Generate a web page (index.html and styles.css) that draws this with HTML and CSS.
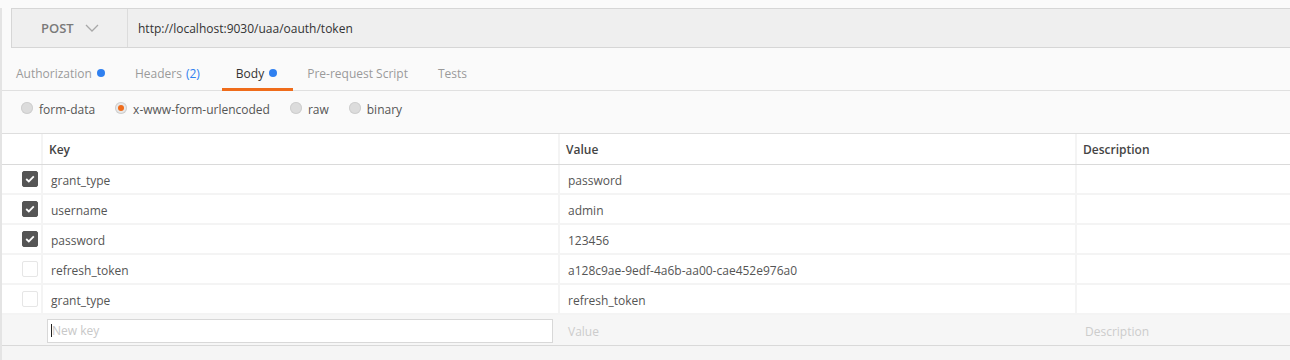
FILE: index.html
```html
<!DOCTYPE html>
<html lang="en">
<head>
  <meta charset="UTF-8" />
  <title>POST token</title>
  <link rel="stylesheet" href="styles.css">
</head>
<body>
  <div class="builder">
    <!-- request line -->
    <div class="url-bar">
      <div class="method">
        <span>POST</span>
        <svg class="chevron" width="14" height="8" viewBox="0 0 14 8"><path d="M1 1 L7 7 L13 1" fill="none" stroke="#a8a8a8" stroke-width="1.3"/></svg>
      </div>
      <div class="url">http://localhost:9030/uaa/oauth/token</div>
    </div>

    <!-- tabs -->
    <div class="tabs">
      <div class="tab">Authorization <span class="dot"></span></div>
      <div class="tab">Headers <span class="count">(2)</span></div>
      <div class="tab active">Body <span class="dot"></span></div>
      <div class="tab">Pre-request Script</div>
      <div class="tab">Tests</div>
    </div>

    <div class="body-types">
      <label class="radio"><span class="circle"></span>form-data</label>
      <label class="radio"><span class="circle on"></span>x-www-form-urlencoded</label>
      <label class="radio"><span class="circle"></span>raw</label>
      <label class="radio"><span class="circle"></span>binary</label>
    </div>

    <div class="kv-table">
      <div class="row head">
        <div class="cell check"></div>
        <div class="cell">Key</div>
        <div class="cell">Value</div>
        <div class="cell">Description</div>
      </div>
      <div class="row">
        <div class="cell check"><span class="box on"><svg width="10" height="8" viewBox="0 0 10 8"><path d="M1.2 4 L3.8 6.4 L8.8 1.4" fill="none" stroke="#fff" stroke-width="1.8"/></svg></span></div>
        <div class="cell">grant_type</div>
        <div class="cell">password</div>
        <div class="cell"></div>
      </div>
      <div class="row">
        <div class="cell check"><span class="box on"><svg width="10" height="8" viewBox="0 0 10 8"><path d="M1.2 4 L3.8 6.4 L8.8 1.4" fill="none" stroke="#fff" stroke-width="1.8"/></svg></span></div>
        <div class="cell">username</div>
        <div class="cell">admin</div>
        <div class="cell"></div>
      </div>
      <div class="row">
        <div class="cell check"><span class="box on"><svg width="10" height="8" viewBox="0 0 10 8"><path d="M1.2 4 L3.8 6.4 L8.8 1.4" fill="none" stroke="#fff" stroke-width="1.8"/></svg></span></div>
        <div class="cell">password</div>
        <div class="cell">123456</div>
        <div class="cell"></div>
      </div>
      <div class="row">
        <div class="cell check"><span class="box"></span></div>
        <div class="cell">refresh_token</div>
        <div class="cell">a128c9ae-9edf-4a6b-aa00-cae452e976a0</div>
        <div class="cell"></div>
      </div>
      <div class="row">
        <div class="cell check"><span class="box"></span></div>
        <div class="cell">grant_type</div>
        <div class="cell">refresh_token</div>
        <div class="cell"></div>
      </div>
      <div class="row new">
        <div class="cell check"></div>
        <div class="cell"><div class="input"><span class="caret"></span>New key</div></div>
        <div class="cell placeholder">Value</div>
        <div class="cell placeholder">Description</div>
      </div>
    </div>
    <div class="footer"></div>
  </div>
</body>
</html>
```

FILE: styles.css
```css
body {
  margin: 0;
  background: #fafafa;
  font-family: 'Open Sans', 'Liberation Sans', sans-serif;
  font-size: 12px;
  color: #555;
  overflow: hidden;
}

.builder {
  border-left: 2px solid #e4e4e4;
  min-height: 360px;
  background: #fafafa;
}

.url-bar {
  display: flex;
  margin: 8px 0 0 9px;
  height: 38px;
  border: 1px solid #d6d6d6;
  border-right: none;
  background: #efefef;
}

.method {
  width: 116px;
  border-right: 1px solid #dcdcdc;
  display: flex;
  align-items: center;
  padding-left: 29px;
  box-sizing: border-box;
  font-size: 13px;
  font-weight: 600;
  color: #7a7a7a;
}

.method .chevron {
  margin-left: 11px;
}

.url {
  display: flex;
  align-items: center;
  padding-left: 10px;
  color: #333;
}

.tabs {
  display: flex;
  height: 42px;
  border-bottom: 1px solid #e0e0e0;
}

.tab {
  display: flex;
  align-items: center;
  padding: 10px 16px 0 14px;
  color: #9a9a9a;
  border-bottom: 3px solid transparent;
  margin-bottom: -1px;
}

.tab.active {
  color: #333;
  border-bottom-color: #ef6c1b;
}

.tab .dot {
  width: 8px;
  height: 8px;
  border-radius: 50%;
  background: #2f80f0;
  margin-left: 5px;
}

.tab .count {
  color: #2f80f0;
  margin-left: 4px;
  margin-right: 6px;
}

.body-types {
  display: flex;
  align-items: center;
  height: 42px;
  padding-left: 19px;
  padding-bottom: 5px;
  box-sizing: border-box;
}

.radio {
  display: flex;
  align-items: center;
  margin-right: 20px;
  color: #555;
}

.radio .circle {
  width: 12px;
  height: 12px;
  border-radius: 50%;
  background: #dcdcdc;
  box-shadow: inset 0 0 0 1px #cfcfcf;
  margin-right: 6px;
  margin-top: -3px;
  display: flex;
  align-items: center;
  justify-content: center;
}

.radio .circle.on {
  background: #e8e8e8;
}

.radio .circle.on::after {
  content: '';
  width: 6px;
  height: 6px;
  border-radius: 50%;
  background: #ef6c1b;
}

.kv-table {
  border-top: 1px solid #dedede;
  background: #fff;
}

.row {
  display: grid;
  grid-template-columns: 39px 517px 517px 1fr;
  height: 30px;
  border-bottom: 2px solid #f4f4f4;
  box-sizing: border-box;
}

.row .cell {
  display: flex;
  align-items: center;
  padding: 2px 0 0 8px;
  border-left: 2px solid #f4f4f4;
}

.row .cell.check {
  border-left: none;
  justify-content: flex-end;
  padding: 0 3px 0 0;
}

.row.head {
  height: 31px;
  border-bottom: 1px solid #dadada;
  font-weight: 600;
  color: #444;
}

.row.head .cell {
  padding: 0 0 0 6px;
}

.row.head .cell.check {
  padding: 0;
}

.box {
  width: 16px;
  height: 16px;
  border-radius: 2px;
  box-sizing: border-box;
  border: 1px solid #e6e6e6;
  background: #fff;
  display: flex;
  align-items: center;
  justify-content: center;
}

.box.on {
  background: #555;
  border-color: #555;
}

.row.new {
  background: #f6f6f6;
  border-bottom: 1px solid #d9d9d9;
  height: 31px;
}

.row.new .cell {
  border-left-color: transparent;
}

.row.new .cell:nth-child(2) {
  padding: 1px 5px 0 4px;
}

.input {
  width: 100%;
  height: 24px;
  background: #fff;
  border: 1px solid #d8d8d8;
  box-sizing: border-box;
  display: flex;
  align-items: center;
  padding-left: 3px;
  color: #c8c8c8;
}

.caret {
  width: 1px;
  height: 13px;
  background: #222;
}

.placeholder {
  color: #cccccc;
}

.footer {
  height: 20px;
  background: #f5f5f5;
}
```
